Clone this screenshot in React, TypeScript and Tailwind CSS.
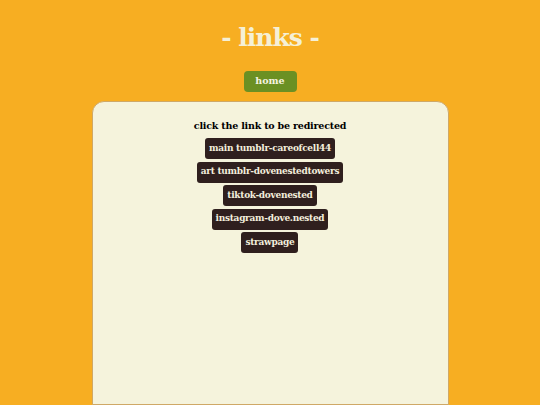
const links = [
  "main tumblr-careofcell44",
  "art tumblr-dovenestedtowers",
  "tiktok-dovenested",
  "instagram-dove.nested",
  "strawpage",
];

export default function App() {
  return (
    <div
      className="h-[405px] w-full bg-[#f7ae22] flex flex-col items-center overflow-hidden"
      style={{ fontFamily: '"DejaVu Serif", serif' }}
    >
      <h1 className="mt-[22px] text-[25px] leading-[32px] font-bold text-[#f5f0d6] tracking-[-1px]">
        - links -
      </h1>
      <a className="mt-[17px] bg-[#6b9023] text-[#f7f3e0] text-[9.5px] font-bold rounded-[4px] w-[53px] h-[21px] flex items-center justify-center">
        home
      </a>
      <div className="mt-[9px] w-[357px] flex-1 bg-[#f5f3dc] border border-[#cfa866] rounded-t-[12px] flex flex-col items-center pt-[17px]">
        <p className="text-[9.5px] font-bold text-black leading-[14px] tracking-[-0.2px]">
          click the link to be redirected
        </p>
        <div className="mt-[5px] flex flex-col items-center gap-[2.5px]">
          {links.map((l) => (
            <a
              key={l}
              className="bg-[#2f1f1e] text-[#f3eedd] text-[9px] font-bold tracking-[-0.3px] rounded-[3px] px-[4px] h-[21px] flex items-center"
            >
              {l}
            </a>
          ))}
        </div>
      </div>
    </div>
  );
}
